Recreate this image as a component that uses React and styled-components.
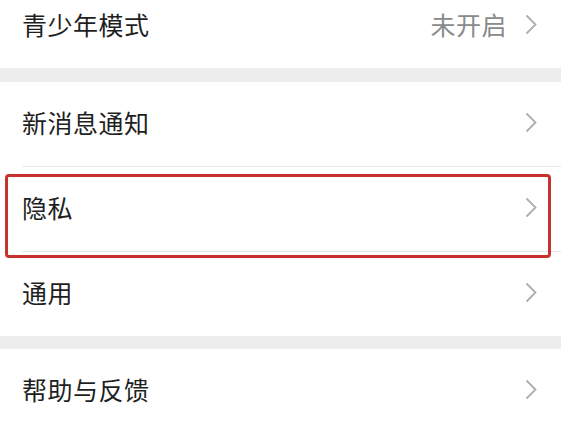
import React from 'react';
import styled, {createGlobalStyle} from 'styled-components';

const GlobalStyle = createGlobalStyle`
  html, body {
    margin: 0;
    padding: 0;
    background: #fff;
  }
  body {
    font-family: "Noto Sans CJK SC", "Noto Sans", sans-serif;
    overflow: hidden;
  }
`;

const Page = styled.div`
  width: 561px;
  margin-top: -16px;
  background: #fff;
`;

const Band = styled.div`
  height: ${p => p.h || 14}px;
  background: #ededed;
`;

const Row = styled.div`
  display: flex;
  padding-left: 22px;
  background: #fff;
`;

const Inner = styled.div`
  flex: 1;
  display: flex;
  align-items: center;
  box-sizing: border-box;
  height: ${p => (p.divider ? 85 : 84)}px;
  padding: 0 24px 4px 0;
  border-bottom: ${p => (p.divider ? '1px solid #e8e8e8' : 'none')};
`;

const Label = styled.span`
  flex: 1;
  font-size: 25px;
  color: #1f1f1f;
  letter-spacing: 0.5px;
`;

const Value = styled.span`
  font-size: 25px;
  color: #8a8a8a;
  margin-right: 18px;
  letter-spacing: 0.5px;
`;

const Marked = styled.div`
  position: relative;
`;

const Highlight = styled.div`
  position: absolute;
  top: 7px;
  bottom: -6px;
  left: 5px;
  right: 10px;
  border: 3px solid #c8322e;
  border-radius: 4px;
  pointer-events: none;
`;

const Chevron = () => (
  <svg width="12" height="21" viewBox="0 0 12 21">
    <path
      d="M1.5 1.5 L10.5 10.5 L1.5 19.5"
      fill="none"
      stroke="#adadad"
      strokeWidth="1.8"
      strokeLinejoin="miter"
    />
  </svg>
);

const Item = ({label, value, divider}) => (
  <Row>
    <Inner divider={divider}>
      <Label>{label}</Label>
      {value && <Value>{value}</Value>}
      <Chevron />
    </Inner>
  </Row>
);

const App = () => (
  <>
    <GlobalStyle />
    <Page>
      <Item label="青少年模式" value="未开启" />
      <Band h={14} />
      <Item label="新消息通知" divider />
      <Marked>
        <Item label="隐私" divider />
        <Highlight />
      </Marked>
      <Item label="通用" />
      <Band h={13} />
      <Item label="帮助与反馈" />
    </Page>
  </>
);

export default App;
